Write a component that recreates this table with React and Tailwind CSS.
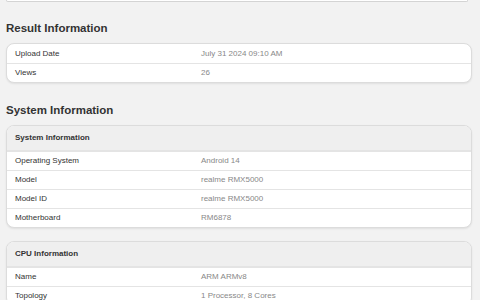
const result = [
  ["Upload Date", "July 31 2024 09:10 AM"],
  ["Views", "26"],
];

const system = [
  ["Operating System", "Android 14"],
  ["Model", "realme RMX5000"],
  ["Model ID", "realme RMX5000"],
  ["Motherboard", "RM6878"],
];

const cpu = [
  ["Name", "ARM ARMv8"],
  ["Topology", "1 Processor, 8 Cores"],
];

function Row({ label, value, first }) {
  return (
    <div
      className={`flex h-[19px] items-center px-[8px] text-[8px] ${
        first ? "" : "border-t border-[#e4e4e4]"
      }`}
    >
      <div className="w-[186px] text-[#333]">{label}</div>
      <div className="text-[#888]">{value}</div>
    </div>
  );
}

function Card({ title, rows, className = "" }) {
  return (
    <div
      className={`ml-[6px] mr-[8px] overflow-hidden rounded-[8px] border border-[#dcdcdc] bg-white shadow-[0_1px_2px_rgba(0,0,0,0.08)] ${className}`}
    >
      {title && (
        <div className="flex h-[25px] items-center border-b border-[#e4e4e4] bg-[#efefef] px-[8px] text-[8px] font-bold text-[#333]">
          {title}
        </div>
      )}
      {rows.map(([l, v], i) => (
        <Row key={l} label={l} value={v} first={i === 0 && !title} />
      ))}
    </div>
  );
}

export default function App() {
  return (
    <div
      className="h-[300px] w-[480px] overflow-hidden bg-[#f2f2f2]"
      style={{ fontFamily: '"Liberation Sans", Arial, sans-serif' }}
    >
      <div className="ml-[6px] mr-[12px] h-[2px] rounded-b-[8px] border border-t-0 border-[#d4d4d4] bg-white" />
      <h2 className="mb-[8px] mt-[19px] px-[6px] text-[11.5px] font-bold leading-[14px] text-[#333]">
        Result Information
      </h2>
      <Card rows={result} />
      <h2 className="mb-[8px] mt-[20px] px-[6px] text-[11.5px] font-bold leading-[14px] text-[#333]">
        System Information
      </h2>
      <Card title="System Information" rows={system} />
      <Card title="CPU Information" rows={cpu} className="mt-[13px]" />
    </div>
  );
}
